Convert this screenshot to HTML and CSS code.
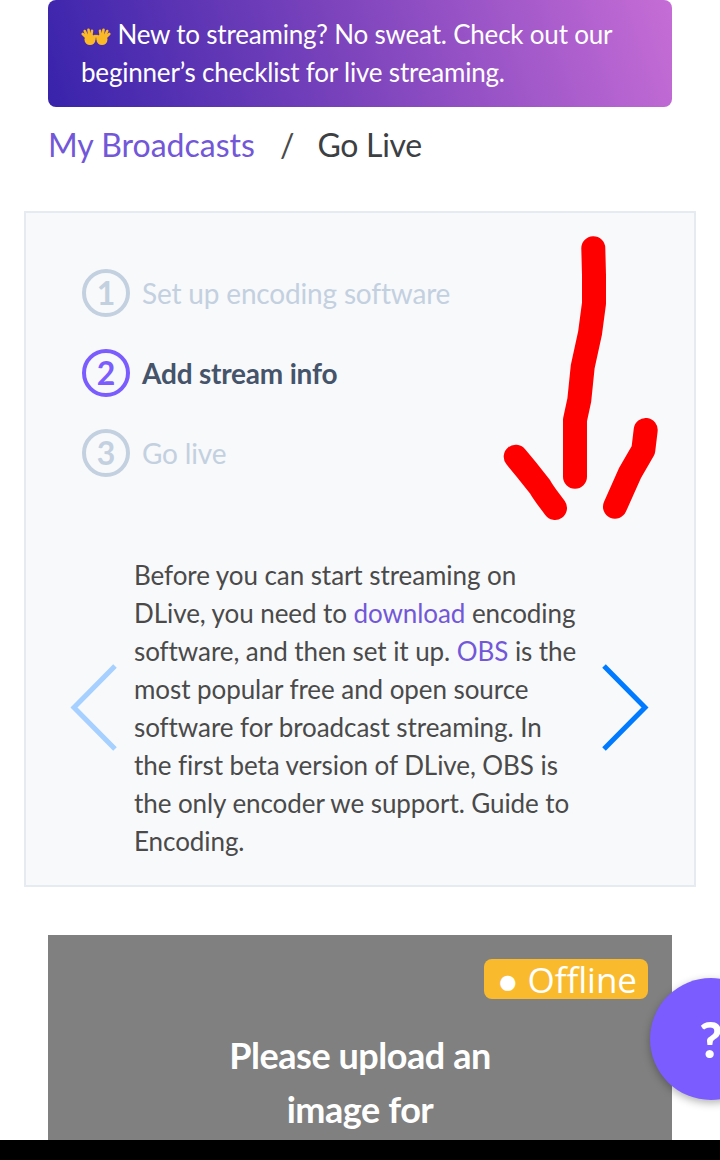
FILE: index.html
```html
<!DOCTYPE html>
<html lang="en">
<head>
<meta charset="utf-8">
<title>Go Live</title>
<link rel="stylesheet" href="styles.css">
</head>
<body>
<div class="screen">
  <main class="page">
    <div class="banner">
      <svg class="hands" viewBox="0 0 30 18" width="30" height="18" aria-hidden="true">
        <g id="hand" fill="none" stroke="#fbb827" stroke-width="2.600" stroke-linecap="round">
          <circle cx="9" cy="11.500" r="5.500" fill="#fbb827" stroke="none"/>
          <path d="M7 11 1.800 6M7 10 3.800 3M8.500 9 7.500 1.800M10 9 11 2.800M12.500 12.500 14 8"/>
        </g>
        <g fill="none" stroke="#fbb827" stroke-width="2.600" stroke-linecap="round">
          <circle cx="21" cy="11.500" r="5.500" fill="#fbb827" stroke="none"/>
          <path d="M23 11 28.200 6M23 10 26.200 3M21.500 9 22.500 1.800M20 9 19 2.800M17.500 12.500 16 8"/>
        </g>
      </svg>
      New to streaming? No sweat. Check out our beginner’s checklist for live streaming.
    </div>

    <nav class="crumbs">
      <span class="crumb-link">My Broadcasts</span>
      <span class="crumb-sep">/</span>
      <span class="crumb-current">Go Live</span>
    </nav>

    <section class="guide">
      <svg class="scribble" viewBox="0 0 160 290" width="160" height="290" aria-hidden="true">
        <g fill="none" stroke="#ff0000" stroke-width="24" stroke-linecap="round" stroke-linejoin="round">
          <path d="M91.300 13.300 92 40 92 68.300 88 98.300 80.700 131.700 77.300 165 73 185 73 241.700"/>
          <path d="M13.700 221.700 24.700 235 38 251.700C42 259 48 266 53 273"/>
          <path d="M143.700 195 141.300 215 128 238 113 271.700"/>
        </g>
      </svg>
      <ol class="steps">
        <li class="step"><span class="num">1</span><span class="label">Set up encoding software</span></li>
        <li class="step step-active"><span class="num">2</span><span class="label">Add stream info</span></li>
        <li class="step"><span class="num">3</span><span class="label">Go live</span></li>
      </ol>
      <div class="carousel">
        <svg class="chev" viewBox="0 0 50 90" width="50" height="90" aria-hidden="true"><path d="M47 3 6 44.500 47 86" fill="none" stroke="#a5d0ff" stroke-width="5"/></svg>
        <p class="copy">Before you can start streaming on DLive, you need to <span class="link">download</span> encoding software, and then set it up. <span class="link">OBS</span> is the most popular free and open source software for broadcast streaming. In the first beta version of DLive, OBS is the only encoder we support. Guide to Encoding.</p>
        <svg class="chev" viewBox="0 0 50 90" width="50" height="90" aria-hidden="true"><path d="M3 3 44 44.500 3 86" fill="none" stroke="#007bff" stroke-width="5"/></svg>
      </div>
    </section>

    <section class="preview">
      <div class="preview-top"><span class="badge">● Offline</span></div>
      <h2 class="preview-title">Please upload an<br>image for</h2>
    </section>
  </main>
  <button class="help" type="button">?</button>
</div>
<div class="navbar"></div>
</body>
</html>
```

FILE: styles.css
```css
* { box-sizing: border-box; }
html, body { margin: 0; padding: 0; }
body {
  width: 720px;
  height: 1160px;
  overflow: hidden;
  background: #fff;
  font-family: Lato, "Liberation Sans", sans-serif;
  color: #3c4043;
}
.screen { position: relative; height: 1140px; overflow: hidden; }
.page { display: flex; flex-direction: column; }
.navbar { height: 20px; background: #000; }

.banner {
  margin: 0 48px;
  height: 107px;
  padding: 15px 32px 0 33px;
  border-radius: 8px;
  background: linear-gradient(72deg, #3823ab 0%, #7f45bd 50%, #c66dd6 100%);
  color: #fff;
  font-size: 26px;
  letter-spacing: -0.2px;
  line-height: 38px;
}
.hands { vertical-align: -2px; }

.crumbs {
  display: flex;
  margin: 16px 48px 0;
  font-size: 32px;
  line-height: 44px;
  height: 88px;
}
.crumb-link { color: #7257d9; }
.crumb-sep { margin: 0 23px 0 25px; color: #4a4a4a; }
.crumb-current { color: #3c4043; letter-spacing: -0.3px; }

.guide {
  position: relative;
  margin: 0 24px;
  height: 676px;
  padding: 56px 0 0;
  background: #f8f9fb;
  border: 2px solid #e6eaf1;
}
.scribble { position: absolute; left: 476px; top: 22px; }
.steps { list-style: none; margin: 0; padding: 0 0 0 56px; display: flex; flex-direction: column; gap: 32px; }
.step { display: flex; align-items: center; gap: 12px; height: 48px; color: #c3d0e0; font-size: 28px; letter-spacing: -0.17px; }
.num {
  width: 48px; height: 48px;
  border: 4px solid #c3d0e0;
  border-radius: 50%;
  display: flex; align-items: center; justify-content: center;
  font-size: 32px; font-weight: 700; line-height: 1;
  letter-spacing: 0;
}
.step-active { color: #45546a; font-weight: 700; letter-spacing: -0.2px; }
.step-active .num { border-color: #7b5cff; color: #7b5cff; }

.carousel { display: flex; align-items: center; gap: 16px; margin-top: 79px; padding-left: 42px; }
.chev { flex: none; }
.copy { flex: none; margin: 0 3px 0 0; width: 448px; font-size: 26px; letter-spacing: -0.07px; line-height: 38px; color: #4a4a4a; }
.link { color: #7257d9; }

.preview {
  margin: 48px 48px 0;
  height: 205px;
  background: #808080;
  padding: 24px;
  color: #fff;
  text-align: center;
}
.preview-top { display: flex; justify-content: flex-end; }
.badge {
  background: #f9bb2d;
  border-radius: 8px;
  height: 40px;
  padding: 0 11px 0 13px;
  font-family: "Open Sans", sans-serif;
  font-size: 35px;
  line-height: 42px;
}
.preview-title { margin: 29px 0 0; font-size: 36px; letter-spacing: -0.45px; line-height: 54px; font-weight: 700; }

.help {
  position: absolute;
  left: 650px; top: 978px;
  width: 122px; height: 122px;
  border: 0; border-radius: 50%;
  padding: 0;
  background: #7b5cff;
  color: #fff;
  font-family: Lato, sans-serif;
  font-size: 50px; font-weight: 900;
  text-align: center;
  box-shadow: 0 3px 8px rgba(0,0,0,.3);
}
```
